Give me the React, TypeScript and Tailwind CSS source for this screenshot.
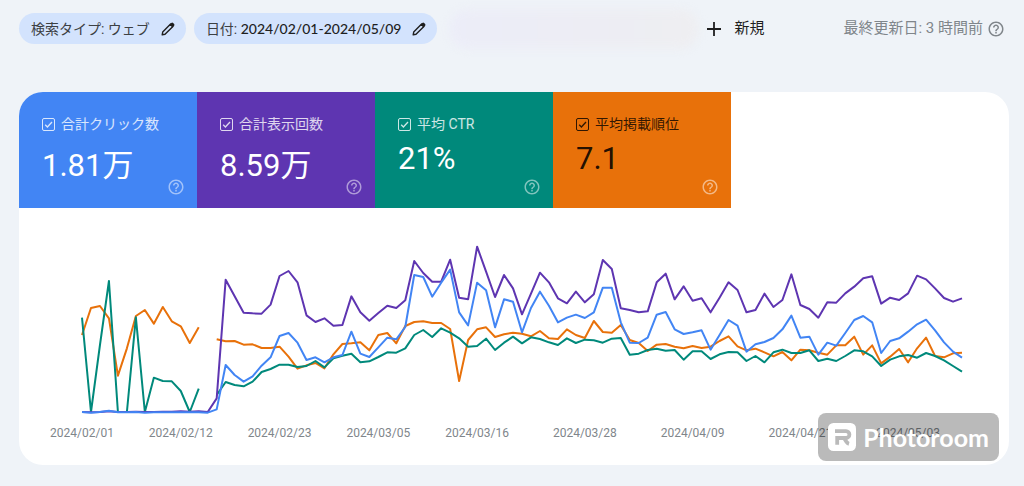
import React from "react";

type Series = { color: string; values: (number | null)[] };

const HEIGHT = 570;

const position: Series = {
  color: "#e8710a",
  values: [
    300, 219, 213, 250, 422, 340, 243, 225, 266, 216, 259, 274, 324, 277, null, 313, 319, 318, 329, 328, 339, 339, 335,
    365, 401, 391, 384, 400, 358, 327, 325, 322, 346, 300, 294, 325, 273, 261, 259, 264, 264, 282, 438, 315, 283, 277,
    306, 298, 293, 296, 304, 288, 310, 312, 283, 300, 309, 258, 291, 293, 270, 315, 324, 348, 329, 327, 335, 340, 333,
    339, 335, 318, 304, 334, 346, 341, 352, 364, 351, 376, 344, 346, 353, 359, 331, 331, 305, 359, 331, 385, 365, 342,
    382, 340, 308, 363, 367, 355, 353,
  ],
};

const ctr: Series = {
  color: "#00897b",
  values: [
    248, 531, 330, 138, 531, 531, 247, 531, 428, 438, 439, 468, 531, 461, null, 480, 441, 450, 454, 440, 411, 402, 389,
    389, 396, 393, 378, 397, 370, 362, 356, 382, 379, 366, 352, 353, 340, 300, 285, 306, 280, 293, 310, 335, 333, 311,
    345, 323, 305, 325, 307, 312, 322, 330, 310, 324, 314, 316, 323, 311, 309, 359, 356, 345, 341, 347, 345, 374, 349,
    349, 372, 358, 351, 352, 378, 363, 382, 352, 344, 354, 354, 346, 378, 371, 378, 363, 346, 349, 364, 393, 374, 364,
    360, 368, 354, 363, 376, 393, 410,
  ],
};

const impressions: Series = {
  color: "#5e35b1",
  values: [
    531, 532, 531, 529, 531, 531, 530, 531, 531, 530, 530, 529, 530, 529, 531, 490, 134, 184, 233, 235, 236, 209, 123,
    108, 142, 241, 261, 250, 272, 270, 184, 232, 257, 234, 212, 219, 196, 78, 114, 140, 140, 74, 188, 193, 35, 110,
    186, 120, 160, 238, 176, 113, 142, 190, 205, 170, 202, 178, 75, 102, 220, 225, 232, 229, 142, 116, 193, 154, 197,
    190, 232, 188, 142, 165, 232, 225, 176, 216, 195, 118, 210, 222, 248, 202, 203, 175, 155, 130, 124, 206, 188, 195,
    175, 122, 133, 160, 189, 200, 190,
  ],
};

const clicks: Series = {
  color: "#4285f4",
  values: [
    531, 533, 531, 527, 532, 532, 531, 533, 532, 532, 532, 532, 532, 532, 533, 523, 390, 420, 440, 424, 392, 367, 303,
    294, 323, 375, 367, 382, 367, 360, 290, 356, 366, 337, 308, 313, 276, 120, 126, 185, 143, 104, 232, 271, 143, 166,
    277, 193, 200, 292, 219, 170, 212, 262, 248, 239, 249, 232, 158, 158, 262, 323, 324, 308, 239, 231, 283, 297, 292,
    286, 344, 300, 255, 272, 350, 328, 321, 309, 283, 242, 308, 305, 359, 323, 332, 294, 255, 243, 262, 354, 318, 310,
    290, 268, 254, 286, 322, 350, 368,
  ],
};

const dates = [
  "2024/02/01",
  "2024/02/12",
  "2024/02/23",
  "2024/03/05",
  "2024/03/16",
  "2024/03/28",
  "2024/04/09",
  "2024/04/21",
  "2024/05/03",
];

function toPath(values: (number | null)[]) {
  let pen = "M";
  let path = "";
  values.forEach((value, day) => {
    if (value === null) {
      pen = "M";
      return;
    }
    path += `${pen}${day * 10} ${value}`;
    pen = "L";
  });
  return path;
}

function PencilIcon() {
  return (
    <svg viewBox="0 0 16 16" className="size-4 shrink-0" aria-hidden="true">
      <path
        d="M2.2 13.8 2.7 11 10.6 3.1 12.9 5.4 5 13.3Z"
        fill="none"
        stroke="#1f1f1f"
        strokeWidth="1.4"
        strokeLinejoin="round"
      />
      <path d="M9.6 3.6 11.3 1.9Q12.2 1.1 13.1 1.9L14.1 2.9Q14.9 3.8 14.1 4.7L12.4 6.4Z" fill="#1f1f1f" />
    </svg>
  );
}

function HelpIcon() {
  return (
    <svg viewBox="0 0 24 24" className="size-[18px] fill-current" aria-hidden="true">
      <path d="M11 18h2v-2h-2v2zm1-16C6.48 2 2 6.48 2 12s4.48 10 10 10 10-4.48 10-10S17.52 2 12 2zm0 18c-4.41 0-8-3.59-8-8s3.59-8 8-8 8 3.59 8 8-3.59 8-8 8zm0-14c-2.21 0-4 1.79-4 4h2c0-1.1.9-2 2-2s2 .9 2 2c0 2-3 1.75-3 5h2c0-2.25 3-2.5 3-5 0-2.21-1.79-4-4-4z" />
    </svg>
  );
}

function Chip({ children }: { children: React.ReactNode }) {
  return (
    <button
      type="button"
      className="flex h-[31px] items-center gap-2.5 rounded-full bg-[#d3e3fd] pr-2.5 pl-3 text-sm whitespace-nowrap text-[#3c4043]"
    >
      <span>{children}</span>
      <PencilIcon />
    </button>
  );
}

function Tile({ id, label, value, className, muted }: { id: string; label: string; value: string; className: string; muted: string }) {
  return (
    <div className={`flex h-[116px] w-[178px] pt-6 pr-3 pb-3 pl-[23px] ${className}`}>
      <div className="flex-1">
        <label htmlFor={id} className={`flex items-center gap-1.5 text-sm leading-4 whitespace-nowrap ${muted}`}>
          <span className="grid size-[13px] shrink-0">
            <input
              id={id}
              type="checkbox"
              defaultChecked
              className="peer col-start-1 row-start-1 size-[13px] appearance-none rounded-[2px] border border-current"
            />
            <svg
              viewBox="0 0 13 13"
              className="pointer-events-none invisible col-start-1 row-start-1 size-[13px] fill-none stroke-current peer-checked:visible"
              aria-hidden="true"
            >
              <path d="M3.2 6.8 5.4 9 10 4" strokeWidth="1.3" />
            </svg>
          </span>
          {label}
        </label>
        <p className="mt-2 w-0 text-[31px] leading-[normal] whitespace-nowrap">{value}</p>
      </div>
      <button type="button" aria-label={`${label}のヘルプ`} className="-ml-5 self-end text-white/50">
        <HelpIcon />
      </button>
    </div>
  );
}

function Watermark() {
  return (
    <div className="absolute right-2.5 bottom-1 flex h-12 items-center gap-[7px] rounded-lg bg-black/27 pr-2.5 pl-2.5">
      <svg viewBox="0 0 28 28" className="size-7" aria-hidden="true">
        <rect width="28" height="28" rx="5.5" fill="#fff" />
        <path
          d="M7 8.2h11a3.4 3.4 0 0 1 0 6.8H9.2v6.8M16 15l2.2 3.6q1 1.7 2.8 2.2"
          fill="none"
          stroke="#bababa"
          strokeWidth="3.8"
        />
      </svg>
      <span className="font-['Lato',sans-serif] text-[25px] leading-8 font-bold text-white">Photoroom</span>
    </div>
  );
}

export default function App() {
  return (
    <div className="min-h-screen bg-[#eff3f8] px-[19px] pt-[13px] pb-5 font-['Roboto','Noto_Sans_CJK_JP',sans-serif]">
      <header className="flex h-[31px] items-center">
        <div className="flex gap-2">
          <Chip>検索タイプ: ウェブ</Chip>
          <Chip>
            日付: <span className="font-['Lato',sans-serif] font-medium text-[#1f1f1f]">2024/02/01-2024/05/09</span>
          </Chip>
        </div>
        <div className="ml-3 h-10 max-w-[250px] flex-1 rounded-full bg-linear-to-r from-[#ecedf8] to-[#eeeef1] blur-[4px]" />
        <button type="button" className="ml-[7px] flex items-center gap-3 text-[15px] whitespace-nowrap text-[#1f1f1f]">
          <svg viewBox="0 0 16 16" className="size-4 fill-none stroke-current" aria-hidden="true">
            <path d="M8 1v14M1 8h14" strokeWidth="1.8" />
          </svg>
          新規
        </button>
        <div className="ml-auto flex items-center gap-1 text-[15px] whitespace-nowrap text-[#80868b]">
          最終更新日: 3 時間前
          <button type="button" aria-label="最終更新日のヘルプ">
            <HelpIcon />
          </button>
        </div>
      </header>

      <main className="relative mt-12 mr-[-4px] overflow-hidden rounded-3xl bg-white pb-6">
        <div className="flex">
          <Tile id="clicks" label="合計クリック数" value="1.81万" className="bg-[#4285f4] text-white" muted="text-white/80" />
          <Tile id="impressions" label="合計表示回数" value="8.59万" className="bg-[#5e35b1] text-white" muted="text-white/80" />
          <Tile id="ctr" label="平均 CTR" value="21%" className="bg-[#00897b] text-white" muted="text-white/80" />
          <Tile id="position" label="平均掲載順位" value="7.1" className="bg-[#e8710a] text-black/87" muted="text-black/80" />
        </div>
        <div className="mt-[27px] mr-[47px] ml-[63px]">
          <svg
            viewBox={`0 0 980 ${HEIGHT}`}
            preserveAspectRatio="none"
            className="block h-[190px] w-full overflow-visible"
            role="img"
            aria-label="検索パフォーマンス"
          >
            {[position, ctr, impressions, clicks].map((series) => (
              <path
                key={series.color}
                d={toPath(series.values)}
                fill="none"
                stroke={series.color}
                strokeWidth="2"
                strokeLinejoin="round"
                vectorEffect="non-scaling-stroke"
              />
            ))}
          </svg>
          <div className="grid grid-cols-[11fr_11fr_11fr_11fr_12fr_12fr_12fr_12fr_6fr] text-xs leading-4 text-[#80868b]">
            {dates.map((date) => (
              <div key={date} className="flex w-0 justify-center">
                <span className="whitespace-nowrap">{date}</span>
              </div>
            ))}
          </div>
        </div>
        <Watermark />
      </main>
    </div>
  );
}
